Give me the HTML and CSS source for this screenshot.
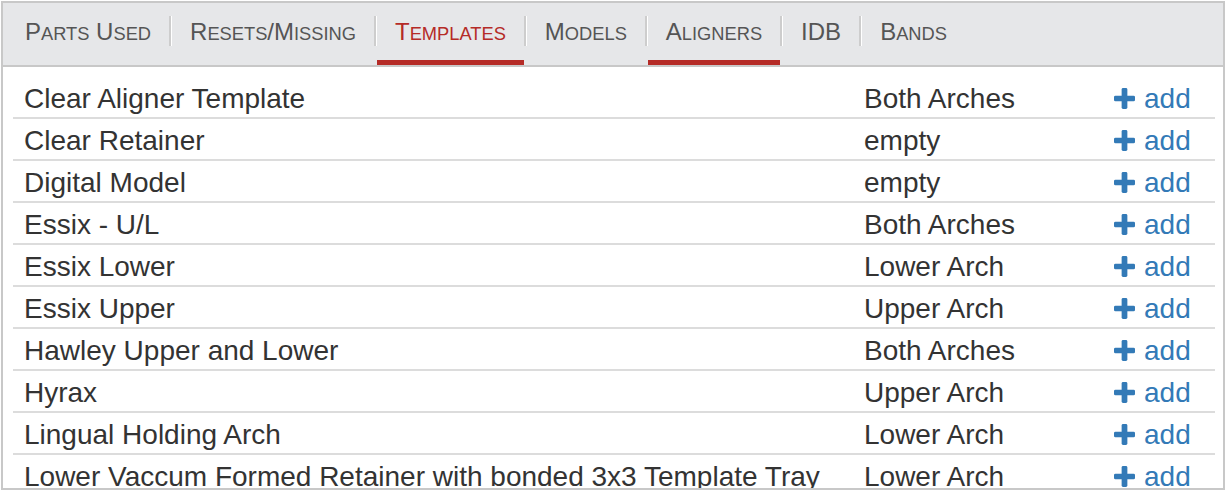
FILE: index.html
```html
<!DOCTYPE html>
<html>
<head>
<meta charset="utf-8">
<link rel="stylesheet" href="styles.css">
</head>
<body>
<div class="panel">
  <div class="tabs">
    <div class="tab">P<span class="sm">arts</span> U<span class="sm">sed</span></div>
    <span class="sep"></span>
    <div class="tab">R<span class="sm">esets</span>/M<span class="sm">issing</span></div>
    <span class="sep"></span>
    <div class="tab active">T<span class="sm">emplates</span></div>
    <span class="sep"></span>
    <div class="tab">M<span class="sm">odels</span></div>
    <span class="sep"></span>
    <div class="tab underline">A<span class="sm">ligners</span></div>
    <span class="sep"></span>
    <div class="tab">IDB</div>
    <span class="sep"></span>
    <div class="tab">B<span class="sm">ands</span></div>
  </div>
  <div class="table">
    <div class="row"><div class="c1">Clear Aligner Template</div><div class="c2">Both Arches</div><div class="c3"><a class="add"><svg class="plus" viewBox="0 0 22 22"><rect x="8" y="0" width="6" height="22" rx="1.5"/><rect x="0" y="8" width="22" height="6" rx="1.5"/></svg>add</a></div></div>
    <div class="row"><div class="c1">Clear Retainer</div><div class="c2">empty</div><div class="c3"><a class="add"><svg class="plus" viewBox="0 0 22 22"><rect x="8" y="0" width="6" height="22" rx="1.5"/><rect x="0" y="8" width="22" height="6" rx="1.5"/></svg>add</a></div></div>
    <div class="row"><div class="c1">Digital Model</div><div class="c2">empty</div><div class="c3"><a class="add"><svg class="plus" viewBox="0 0 22 22"><rect x="8" y="0" width="6" height="22" rx="1.5"/><rect x="0" y="8" width="22" height="6" rx="1.5"/></svg>add</a></div></div>
    <div class="row"><div class="c1">Essix - U/L</div><div class="c2">Both Arches</div><div class="c3"><a class="add"><svg class="plus" viewBox="0 0 22 22"><rect x="8" y="0" width="6" height="22" rx="1.5"/><rect x="0" y="8" width="22" height="6" rx="1.5"/></svg>add</a></div></div>
    <div class="row"><div class="c1">Essix Lower</div><div class="c2">Lower Arch</div><div class="c3"><a class="add"><svg class="plus" viewBox="0 0 22 22"><rect x="8" y="0" width="6" height="22" rx="1.5"/><rect x="0" y="8" width="22" height="6" rx="1.5"/></svg>add</a></div></div>
    <div class="row"><div class="c1">Essix Upper</div><div class="c2">Upper Arch</div><div class="c3"><a class="add"><svg class="plus" viewBox="0 0 22 22"><rect x="8" y="0" width="6" height="22" rx="1.5"/><rect x="0" y="8" width="22" height="6" rx="1.5"/></svg>add</a></div></div>
    <div class="row"><div class="c1">Hawley Upper and Lower</div><div class="c2">Both Arches</div><div class="c3"><a class="add"><svg class="plus" viewBox="0 0 22 22"><rect x="8" y="0" width="6" height="22" rx="1.5"/><rect x="0" y="8" width="22" height="6" rx="1.5"/></svg>add</a></div></div>
    <div class="row"><div class="c1">Hyrax</div><div class="c2">Upper Arch</div><div class="c3"><a class="add"><svg class="plus" viewBox="0 0 22 22"><rect x="8" y="0" width="6" height="22" rx="1.5"/><rect x="0" y="8" width="22" height="6" rx="1.5"/></svg>add</a></div></div>
    <div class="row"><div class="c1">Lingual Holding Arch</div><div class="c2">Lower Arch</div><div class="c3"><a class="add"><svg class="plus" viewBox="0 0 22 22"><rect x="8" y="0" width="6" height="22" rx="1.5"/><rect x="0" y="8" width="22" height="6" rx="1.5"/></svg>add</a></div></div>
    <div class="row"><div class="c1">Lower Vaccum Formed Retainer with bonded 3x3 Template Tray</div><div class="c2">Lower Arch</div><div class="c3"><a class="add"><svg class="plus" viewBox="0 0 22 22"><rect x="8" y="0" width="6" height="22" rx="1.5"/><rect x="0" y="8" width="22" height="6" rx="1.5"/></svg>add</a></div></div>
  </div>
</div>
</body>
</html>
```

FILE: styles.css
```css
html, body {
  margin: 0;
  padding: 0;
  background: #fff;
}
body {
  font-family: "Liberation Sans", Arial, sans-serif;
}
.panel {
  margin: 1px 1px 0 1px;
  height: 489px;
  box-sizing: border-box;
  border: 2px solid #c8c8c8;
  overflow: hidden;
  background: #fff;
}
.tabs {
  display: flex;
  align-items: flex-start;
  height: 62px;
  background: #e6e7e9;
  border-bottom: 2px solid #c8c8c8;
  padding-left: 4px;
}
.tab {
  box-sizing: border-box;
  height: 62px;
  padding: 0 18px;
  line-height: 57px;
  border-bottom: 5px solid transparent;
  color: #555;
  font-size: 24px;
  white-space: nowrap;
}
.tab .sm {
  font-size: 18.3px;
  text-transform: uppercase;
}
.tab.active {
  color: #b52b27;
  border-bottom-color: #b52b27;
}
.tab.underline {
  border-bottom-color: #b52b27;
}
.sep {
  flex: none;
  width: 0;
  height: 30px;
  margin-top: 13px;
  border-left: 2px solid #cdcdcd;
  border-right: 1px solid #fff;
}
.table {
  margin: 10px 8px 0 10px;
}
.row {
  display: grid;
  grid-template-columns: 840px 249px 1fr;
  height: 42px;
  box-sizing: border-box;
  padding-top: 3px;
  border-bottom: 2px solid #dcdcdc;
  font-size: 28px;
  color: #333;
  line-height: 37px;
}
.row > div {
  padding-left: 11px;
  white-space: nowrap;
  overflow: hidden;
}
.add {
  color: #337ab7;
  display: inline-flex;
  align-items: center;
  gap: 8px;
}
.plus {
  width: 23px;
  height: 21px;
  fill: #337ab7;
}
```
